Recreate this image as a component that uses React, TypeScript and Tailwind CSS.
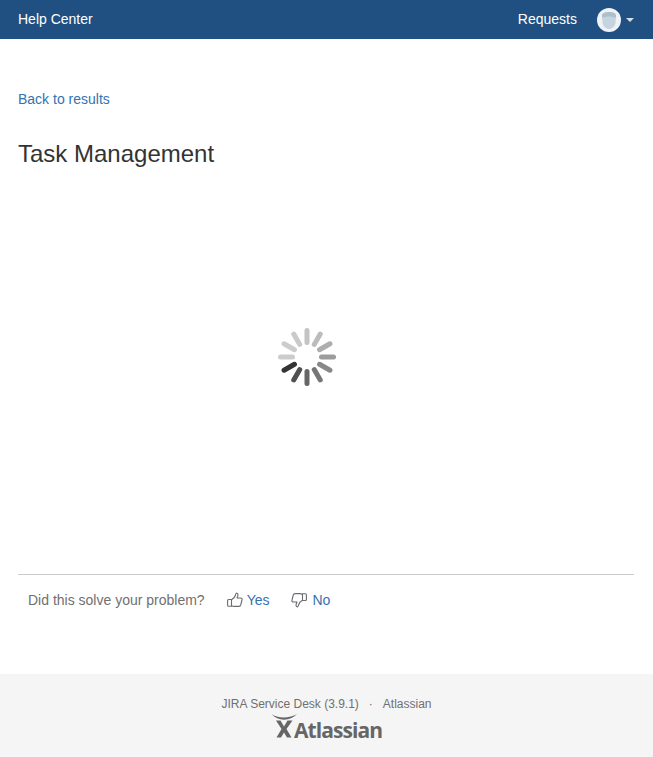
import React from "react";

const spokes = [
  [240, "#333333"], [210, "#505050"], [180, "#666666"], [150, "#767676"],
  [120, "#888888"], [90, "#9c9c9c"], [60, "#aeaeae"], [30, "#bcbcbc"],
  [0, "#c4c4c4"], [330, "#cacaca"], [300, "#cccccc"], [270, "#cccccc"],
] as const;

function Spinner() {
  return (
    <svg width="60" height="60" viewBox="0 0 60 60">
      {spokes.map(([a, c]) => (
        <line key={a} x1="30" y1="15.5" x2="30" y2="3.5" stroke={c} strokeWidth="5" strokeLinecap="round" transform={`rotate(${a} 30 30)`} />
      ))}
    </svg>
  );
}

function ThumbUp({ flip }: { flip?: boolean }) {
  return (
    <svg width="16" height="16" viewBox="0 0 16 16" fill="none" stroke="#6b6b70" strokeWidth="1.1" strokeLinejoin="round" className={flip ? "rotate-180" : ""}>
      <path d="M4.5 7.5 H1.6 C1 7.5 .6 8 .6 8.5 V13.2 C.6 13.9 1 14.3 1.6 14.3 H4.5 Z" />
      <path d="M4.5 7.8 C6 7 8 5 8.5 3 C8.8 1.6 9.2 1 10 1.2 C11 1.5 11.2 2.8 10.7 4.2 L10 6 H13.6 C14.8 6 15.4 7 15 8 L13.7 13 C13.4 14 12.8 14.4 12 14.4 H7 C6 14.4 5.3 14 4.5 13.6" />
    </svg>
  );
}

function Avatar() {
  return (
    <svg width="24" height="24" viewBox="0 0 24 24" className="ml-5">
      <circle cx="12" cy="12" r="12" fill="#eff3f8" />
      <path d="M5 8 C5 5 8 4 12 4 C16 4 19 5 19 8 L18.5 15 C18 18.5 15 21 12 21 C9 21 6 18.5 5.5 15 Z" fill="#c5d5df" />
      <path d="M5 8 C5 5 8 4 12 4 C16 4 19 5 19 8 L18.8 10 C16 8 8 8 5.2 10 Z" fill="#aebfca" />
    </svg>
  );
}

function AtlassianMark() {
  return (
    <svg width="27" height="25" viewBox="0 0 27 25" className="shrink-0">
      <path d="M.5 1 C6 5.5 19 5.5 26 1 C19 8.5 7 8.5 .5 1 Z" fill="#666666" />
      <path d="M5 7.5 H9.5 L13 13.5 L16.5 7.5 H21.5 L15.5 16 L20.5 24.5 H16 L13 19.5 L10 24.5 H5.5 L10.5 16 Z" fill="#666666" />
    </svg>
  );
}

export default function App() {
  return (
    <div className="min-h-[757px] flex flex-col bg-white text-[14px] text-[#333333] font-['Liberation_Sans',Arial,sans-serif]">
      <header className="h-[39px] bg-[#205081] flex items-center text-white pl-[18px] pr-[19px]">
        <span>Help Center</span>
        <span className="ml-auto">Requests</span>
        <Avatar />
        <span className="ml-[5px] w-0 h-0 border-x-[4px] border-x-transparent border-t-[4px] border-t-[#d5dee8]" />
      </header>

      <main className="flex-1 flex flex-col pl-[18px] pr-[19px]">
        <a className="mt-[50px] leading-5 text-[#3572b0]">Back to results</a>
        <h1 className="mt-[30px] text-[24px] leading-[30px] font-normal text-[#333333]">Task Management</h1>
        <div className="h-[405px] flex items-center justify-center pb-[29px] pr-[38px]">
          <Spinner />
        </div>
        <div className="border-t border-[#cccccc] h-[100px] pl-[10px] pt-[15px] flex items-start gap-[22px]">
          <span className="leading-5 text-[#707070]">Did this solve your problem?</span>
          <a className="flex items-center gap-[4px] leading-5 text-[#3572b0]"><ThumbUp />Yes</a>
          <a className="flex items-center gap-[5px] leading-5 text-[#3572b0]"><ThumbUp flip />No</a>
        </div>
      </main>

      <footer className="h-[83px] bg-[#f5f5f5] flex flex-col items-center pt-[21px] text-[12px] text-[#707070]">
        <div className="leading-[18px] flex">
          <span>JIRA Service Desk (3.9.1)</span>
          <span className="mx-[10px]">·</span>
          <span>Atlassian</span>
        </div>
        <div className="flex items-start h-[25px] text-[#666666] font-bold text-[21px] leading-[35px] font-['Open_Sans',sans-serif] tracking-[-0.93px]">
          <AtlassianMark />
          <span className="-ml-[4px]">Atlassian</span>
        </div>
      </footer>
    </div>
  );
}
